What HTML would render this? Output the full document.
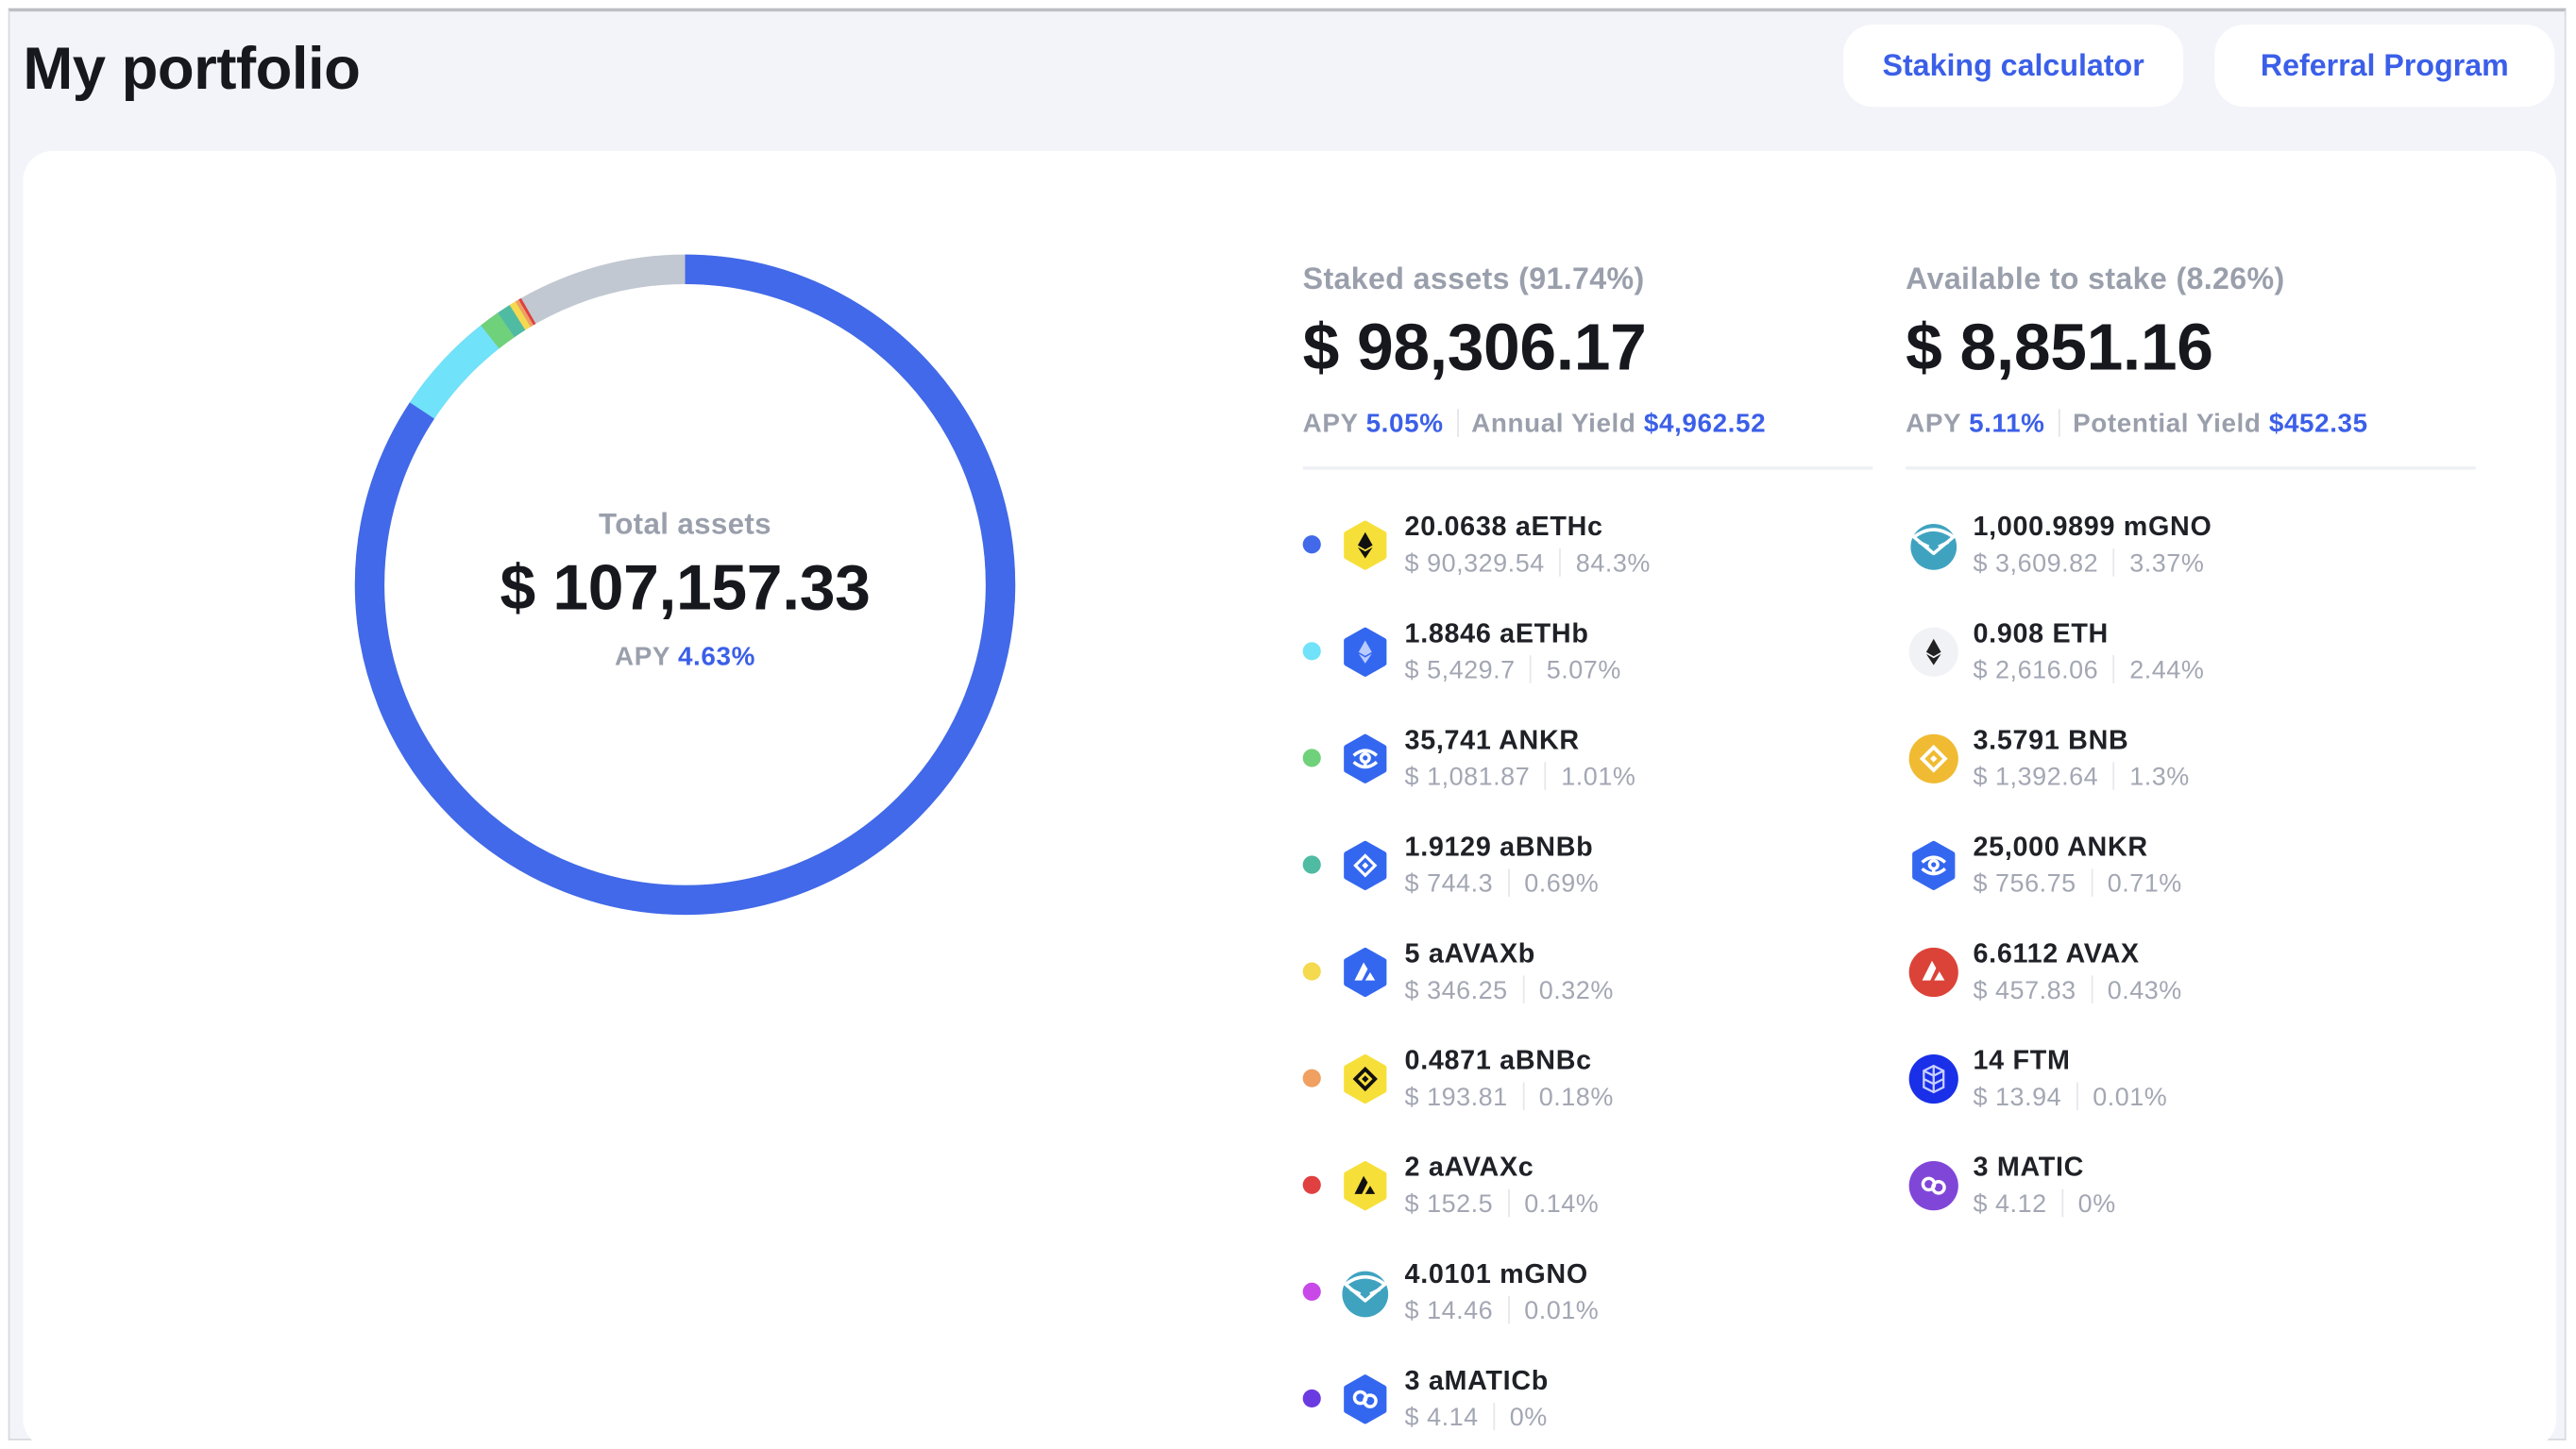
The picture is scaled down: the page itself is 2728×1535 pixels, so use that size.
<!DOCTYPE html>
<html><head><meta charset="utf-8"><style>
html,body{margin:0;padding:0;background:#fff;}
body{width:2728px;height:1532px;overflow:hidden;}
#w{position:absolute;left:0;top:0;width:1568px;height:881px;transform:scale(1.7398);transform-origin:0 0;font-family:"Liberation Sans",sans-serif;}
#frame{position:absolute;left:5px;top:5px;width:1557px;height:872px;background:#f3f4f9;border:1px solid #d8d9de;border-top:2px solid #bdbec3;box-sizing:border-box;overflow:hidden;}
h1{position:absolute;left:8px;top:14px;margin:0;font-size:36.5px;font-weight:bold;color:#16181d;letter-spacing:-0.3px;}
.btn{position:absolute;top:8px;height:50px;background:#fff;border-radius:18px;color:#3b5fe8;font-size:18.5px;font-weight:bold;line-height:50px;text-align:center;}
#card{position:absolute;left:9px;top:86px;width:1542px;height:800px;background:#fff;border-radius:18px;}
.a{position:absolute;white-space:nowrap;}
.g{color:#9a9fac}
.b{color:#3b5fe8;font-weight:bold}
.lbl{font-size:18.5px;color:#9a9fac;font-weight:bold;letter-spacing:0.2px}
.big{font-size:40px;font-weight:bold;color:#16181d;letter-spacing:-0.2px}
.apy{font-size:16px;color:#9a9fac;font-weight:bold;letter-spacing:0.35px}
.sep{display:inline-block;width:1px;height:17px;background:#e2e4ea;vertical-align:-3px;margin:0 8px}
.row{position:absolute;height:50px;}
.row .dot{position:absolute;left:0;top:14px;width:11px;height:11px;border-radius:50%}
.row svg{position:absolute;left:22px;top:4px;width:32px;height:32px}
.row .t{position:absolute;left:62px;top:0;font-size:16.5px;font-weight:bold;color:#1f2127;white-space:nowrap;letter-spacing:0.4px}
.row .s{position:absolute;left:62px;top:22px;font-size:15.5px;color:#a3a7b3;white-space:nowrap;letter-spacing:0.3px}
.row .s i{display:inline-block;width:1px;height:17px;background:#e6e7ec;vertical-align:-3px;margin:0 9px}
.line{position:absolute;top:284px;height:2px;background:#eef0f4;width:347px}
</style></head><body><div id="w"><div id="frame">
<h1>My portfolio</h1>
<div class="btn" style="left:1116px;width:207px">Staking calculator</div>
<div class="btn" style="left:1342px;width:207px">Referral Program</div>
</div>
<div id="card" style="left:14px;top:92px;height:790px"></div>

<svg class="a" style="left:207px;top:146px" width="420" height="420" viewBox="0 0 420 420">
<g transform="rotate(-90 210 210)" fill="none" stroke-width="18">
<circle cx="210" cy="210" r="192" stroke="#c2c8d2"/>
<circle cx="210" cy="210" r="192" stroke="#4169e9" stroke-dasharray="1017 2000" stroke-dashoffset="0"/>
<circle cx="210" cy="210" r="192" stroke="#70e2fa" stroke-dasharray="61.2 2000" stroke-dashoffset="-1017"/>
<circle cx="210" cy="210" r="192" stroke="#6fd17a" stroke-dasharray="12.2 2000" stroke-dashoffset="-1078.2"/>
<circle cx="210" cy="210" r="192" stroke="#4fbba3" stroke-dasharray="8.3 2000" stroke-dashoffset="-1090.4"/>
<circle cx="210" cy="210" r="192" stroke="#f5d94e" stroke-dasharray="3.9 2000" stroke-dashoffset="-1098.7"/>
<circle cx="210" cy="210" r="192" stroke="#f0a060" stroke-dasharray="2.2 2000" stroke-dashoffset="-1102.6"/>
<circle cx="210" cy="210" r="192" stroke="#e04040" stroke-dasharray="1.7 2000" stroke-dashoffset="-1104.8"/>
</g></svg>
<div class="a lbl" style="left:317px;top:309px;width:200px;text-align:center;font-size:18px">Total assets</div>
<div class="a big" style="left:267px;top:337px;width:300px;text-align:center;font-size:39px">$ 107,157.33</div>
<div class="a apy" style="left:317px;top:392px;width:200px;text-align:center">APY <span class="b">4.63%</span></div>

<div class="a lbl" style="left:793px;top:159px">Staked assets (91.74%)</div>
<div class="a big" style="left:793px;top:190px">$ 98,306.17</div>
<div class="a apy" style="left:793px;top:249px">APY <span class="b">5.05%</span><span class="sep"></span>Annual Yield <span class="b">$4,962.52</span></div>
<div class="line" style="left:793px"></div>
<div class="a lbl" style="left:1160px;top:159px">Available to stake (8.26%)</div>
<div class="a big" style="left:1160px;top:190px">$ 8,851.16</div>
<div class="a apy" style="left:1160px;top:249px">APY <span class="b">5.11%</span><span class="sep"></span>Potential Yield <span class="b">$452.35</span></div>
<div class="line" style="left:1160px"></div>

<svg width="0" height="0" style="position:absolute"><defs>
<symbol id="hex" viewBox="0 0 32 32"><path d="M16 2.5 L27.5 9 V23 L16 29.5 L4.5 23 V9 Z" stroke-linejoin="round" stroke-width="3"/></symbol>
</defs></svg>

<div class="row" style="left:793px;top:312px"><div class="dot" style="background:#4169e9"></div>
<svg viewBox="0 0 32 32"><use href="#hex" fill="#f7df3a" stroke="#f7df3a"/><path d="M16 8l-4.5 8 4.5 2.6 4.5-2.6zM11.5 17.2l4.5 6.8 4.5-6.8-4.5 2.6z" fill="#111"/></svg>
<div class="t">20.0638 aETHc</div><div class="s">$ 90,329.54<i></i>84.3%</div></div>

<div class="row" style="left:793px;top:377px"><div class="dot" style="background:#70e2fa"></div>
<svg viewBox="0 0 32 32"><use href="#hex" fill="#3467f0" stroke="#3467f0"/><path d="M16 9l-4 7 4 2.3 4-2.3zM12 17l4 6 4-6-4 2.3z" fill="#b9cbff"/></svg>
<div class="t">1.8846 aETHb</div><div class="s">$ 5,429.7<i></i>5.07%</div></div>

<div class="row" style="left:793px;top:442px"><div class="dot" style="background:#6fd17a"></div>
<svg viewBox="0 0 32 32"><use href="#hex" fill="#3467f0" stroke="#3467f0"/><g fill="none" stroke="#fff" stroke-width="2"><circle cx="16" cy="15.5" r="2.5"/><path d="M9 14q7-6 14 0M9 18q7 6 14 0M16 18v3"/></g></svg>
<div class="t">35,741 ANKR</div><div class="s">$ 1,081.87<i></i>1.01%</div></div>

<div class="row" style="left:793px;top:507px"><div class="dot" style="background:#4fbba3"></div>
<svg viewBox="0 0 32 32"><use href="#hex" fill="#3467f0" stroke="#3467f0"/><g fill="none" stroke="#fff" stroke-width="1.8"><path d="M16 10l6 6-6 6-6-6z"/></g><rect x="14.6" y="14.6" width="2.8" height="2.8" fill="#fff" transform="rotate(45 16 16)"/></svg>
<div class="t">1.9129 aBNBb</div><div class="s">$ 744.3<i></i>0.69%</div></div>

<div class="row" style="left:793px;top:572px"><div class="dot" style="background:#f5d94e"></div>
<svg viewBox="0 0 32 32"><use href="#hex" fill="#3467f0" stroke="#3467f0"/><path d="M15 10l-5.5 11h4.5l3.5-7zM19 16l-3 5h6z" fill="#fff"/></svg>
<div class="t">5 aAVAXb</div><div class="s">$ 346.25<i></i>0.32%</div></div>

<div class="row" style="left:793px;top:637px"><div class="dot" style="background:#f0a060"></div>
<svg viewBox="0 0 32 32"><use href="#hex" fill="#f7df3a" stroke="#f7df3a"/><g fill="none" stroke="#111" stroke-width="2.2"><path d="M16 10l6 6-6 6-6-6z"/></g><rect x="14.5" y="14.5" width="3" height="3" fill="#111" transform="rotate(45 16 16)"/></svg>
<div class="t">0.4871 aBNBc</div><div class="s">$ 193.81<i></i>0.18%</div></div>

<div class="row" style="left:793px;top:702px"><div class="dot" style="background:#e04040"></div>
<svg viewBox="0 0 32 32"><use href="#hex" fill="#f7df3a" stroke="#f7df3a"/><path d="M15 10l-5.5 11h4.5l3.5-7zM19 16l-3 5h6z" fill="#111"/></svg>
<div class="t">2 aAVAXc</div><div class="s">$ 152.5<i></i>0.14%</div></div>

<div class="row" style="left:793px;top:767px"><div class="dot" style="background:#c848e8"></div>
<svg viewBox="0 0 32 32"><circle cx="16" cy="17" r="14" fill="#3fa3c0"/><path d="M4 11q12-9 24 0l-12 10z" fill="#3fa3c0" stroke="#fff" stroke-width="2" stroke-linejoin="round"/><path d="M7 14l6 3M25 14l-6 3" stroke="#fff" stroke-width="2"/></svg>
<div class="t">4.0101 mGNO</div><div class="s">$ 14.46<i></i>0.01%</div></div>

<div class="row" style="left:793px;top:832px"><div class="dot" style="background:#6a3be0"></div>
<svg viewBox="0 0 32 32"><use href="#hex" fill="#3467f0" stroke="#3467f0"/><g fill="none" stroke="#fff" stroke-width="2"><circle cx="13" cy="15" r="3.5"/><circle cx="19" cy="17" r="3.5"/></g></svg>
<div class="t">3 aMATICb</div><div class="s">$ 4.14<i></i>0%</div></div>

<div class="row" style="left:1139px;top:312px">
<svg viewBox="0 0 32 32"><circle cx="16" cy="17" r="14" fill="#3fa3c0"/><path d="M4 11q12-9 24 0l-12 10z" fill="#3fa3c0" stroke="#fff" stroke-width="2" stroke-linejoin="round"/><path d="M7 14l6 3M25 14l-6 3" stroke="#fff" stroke-width="2"/></svg>
<div class="t">1,000.9899 mGNO</div><div class="s">$ 3,609.82<i></i>3.37%</div></div>

<div class="row" style="left:1139px;top:377px">
<svg viewBox="0 0 32 32"><circle cx="16" cy="16" r="15" fill="#f1f2f6"/><path d="M16 8l-4.5 8 4.5 2.6 4.5-2.6zM11.5 17.2l4.5 6.8 4.5-6.8-4.5 2.6z" fill="#222"/></svg>
<div class="t">0.908 ETH</div><div class="s">$ 2,616.06<i></i>2.44%</div></div>

<div class="row" style="left:1139px;top:442px">
<svg viewBox="0 0 32 32"><circle cx="16" cy="16" r="15" fill="#f0bb32"/><g fill="none" stroke="#fff" stroke-width="2.2"><path d="M16 9l7 7-7 7-7-7z"/></g><rect x="14.5" y="14.5" width="3" height="3" fill="#fff" transform="rotate(45 16 16)"/></svg>
<div class="t">3.5791 BNB</div><div class="s">$ 1,392.64<i></i>1.3%</div></div>

<div class="row" style="left:1139px;top:507px">
<svg viewBox="0 0 32 32"><use href="#hex" fill="#3467f0" stroke="#3467f0"/><g fill="none" stroke="#fff" stroke-width="2"><circle cx="16" cy="15.5" r="2.5"/><path d="M9 14q7-6 14 0M9 18q7 6 14 0M16 18v3"/></g></svg>
<div class="t">25,000 ANKR</div><div class="s">$ 756.75<i></i>0.71%</div></div>

<div class="row" style="left:1139px;top:572px">
<svg viewBox="0 0 32 32"><circle cx="16" cy="16" r="15" fill="#dc4338"/><path d="M15 9l-6 12h5l3.5-7.5zM19.5 15.5l-3.2 5.5h6.4z" fill="#fff"/></svg>
<div class="t">6.6112 AVAX</div><div class="s">$ 457.83<i></i>0.43%</div></div>

<div class="row" style="left:1139px;top:637px">
<svg viewBox="0 0 32 32"><circle cx="16" cy="16" r="15" fill="#1a2fe8"/><g fill="none" stroke="#c8d0ff" stroke-width="1.3"><path d="M16 8l6 3v10l-6 3-6-3V11z M10 11l6 3 6-3 M10 16l6 3 6-3 M16 14v10 M16 8v6"/></g></svg>
<div class="t">14 FTM</div><div class="s">$ 13.94<i></i>0.01%</div></div>

<div class="row" style="left:1139px;top:702px">
<svg viewBox="0 0 32 32"><circle cx="16" cy="16" r="15" fill="#8046d8"/><g fill="none" stroke="#fff" stroke-width="2"><circle cx="13" cy="15" r="3.5"/><circle cx="19" cy="17" r="3.5"/></g></svg>
<div class="t">3 MATIC</div><div class="s">$ 4.12<i></i>0%</div></div>

</div></body></html>
